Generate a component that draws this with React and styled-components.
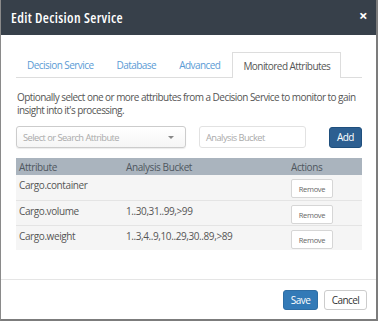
import React from 'react'
import styled, {createGlobalStyle} from 'styled-components'

const GlobalStyle = createGlobalStyle`
  html, body {
    margin: 0;
    padding: 0;
    background: #ffffff;
    font-family: 'Open Sans', 'Liberation Sans', sans-serif;
    letter-spacing: -0.55px;
  }
  * { box-sizing: border-box; }
  button { font-family: inherit; letter-spacing: inherit; }
`

const Modal = styled.div`
  width: 378px;
  height: 321px;
  background: #ffffff;
  border-left: 1px solid #8a8a8a;
  border-right: 2px solid #7c7c7c;
  border-bottom: 2px solid #7c7c7c;
  display: flex;
  flex-direction: column;
`

const Header = styled.div`
  height: 35px;
  background: #37404a;
  display: flex;
  align-items: center;
  justify-content: space-between;
  padding: 0 9px 0 10px;
  color: #ffffff;
`

const Title = styled.h4`
  margin: 0;
  font-size: 14px;
  font-weight: 600;
  font-stretch: 75%;
  letter-spacing: 0.35px;
`

const Close = styled.span`
  font-size: 15px;
  font-weight: 700;
  line-height: 1;
  margin-top: -4px;
`

const Body = styled.div`
  flex: 1;
  padding: 17px 14px 0 15px;
`

const Tabs = styled.div`
  display: flex;
  border-bottom: 1px solid #dddddd;
  height: 26px;
`

const Tab = styled.div`
  padding: 0 10px;
  height: ${p => (p.$active ? '26px' : '25px')};
  display: flex;
  align-items: center;
  font-size: 10px;
  color: ${p => (p.$active ? '#555555' : '#5b9bd5')};
  background: #ffffff;
  border: 1px solid ${p => (p.$active ? '#dddddd' : 'transparent')};
  border-bottom: none;
  margin-right: ${p => p.$gap || 0}px;
  white-space: nowrap;
`

const Description = styled.p`
  margin: 13px 0 0 1px;
  font-size: 10px;
  line-height: 13px;
  color: #555555;
`

const Controls = styled.div`
  display: flex;
  align-items: center;
  margin-top: 9px;
  height: 22px;
`

const Select = styled.div`
  width: 170px;
  height: 22px;
  border: 1px solid #cccccc;
  border-radius: 3px;
  background: linear-gradient(#ffffff, #f5f5f5);
  box-shadow: 0 1px 1px rgba(0, 0, 0, 0.08);
  display: flex;
  align-items: center;
  justify-content: space-between;
  padding: 0 11px 0 6px;
  font-size: 9.3px;
  color: #aaaaaa;
`

const Caret = styled.span`
  width: 0;
  height: 0;
  border-left: 3px solid transparent;
  border-right: 3px solid transparent;
  border-top: 3px solid #888888;
`

const Input = styled.div`
  width: 107px;
  height: 22px;
  margin-left: 13px;
  border: 1px solid #e2e2e2;
  border-radius: 3px;
  display: flex;
  align-items: center;
  padding-left: 6px;
  font-size: 9.3px;
  color: #aaaaaa;
`

const AddButton = styled.button`
  margin-left: auto;
  width: 33px;
  height: 21px;
  border: 1px solid #1f4f7d;
  border-radius: 3px;
  background: #2d5f91;
  color: #ffffff;
  font-size: 10px;
  padding: 0;
`

const Table = styled.div`
  margin-top: 10px;
  display: grid;
  grid-template-columns: 107px 165px 1fr;
  font-size: 10px;
  letter-spacing: -0.4px;
  color: #555555;
`

const HeadCell = styled.div`
  background: #aab4be;
  height: 17px;
  padding-left: 3px;
  display: flex;
  align-items: center;
  color: #4f5760;
`

const Cell = styled.div`
  background: #f5f5f5;
  height: 25px;
  padding: 3px 0 0 3px;
  border-top: ${p => (p.$first ? 'none' : '1px solid #e4e4e4')};
  display: flex;
  align-items: flex-start;
`

const RemoveButton = styled.button`
  width: 42px;
  height: 19px;
  margin-top: 1px;
  border: 1px solid #d6d6d6;
  border-radius: 2px;
  background: #ffffff;
  color: #666666;
  font-size: 7.5px;
  letter-spacing: -0.3px;
  padding: 0;
`

const Footer = styled.div`
  border-top: 1px solid #e5e5e5;
  height: 40px;
  display: flex;
  align-items: center;
  justify-content: flex-end;
  gap: 6px;
  padding-right: 9px;
`

const FooterButton = styled.button`
  width: ${p => p.$width}px;
  height: 20px;
  border-radius: 3px;
  font-size: 10px;
  padding: 0;
  border: 1px solid ${p => (p.$primary ? '#2e6da4' : '#cccccc')};
  background: ${p => (p.$primary ? '#337ab7' : '#ffffff')};
  color: ${p => (p.$primary ? '#ffffff' : '#333333')};
`

const rows = [
  {attr: 'Cargo.container', bucket: ''},
  {attr: 'Cargo.volume', bucket: '1..30,31..99,>99'},
  {attr: 'Cargo.weight', bucket: '1..3,4..9,10..29,30..89,>89'},
]

const App = () => (
  <>
    <GlobalStyle />
    <Modal>
      <Header>
        <Title>Edit Decision Service</Title>
        <Close>×</Close>
      </Header>
      <Body>
        <Tabs>
          <Tab $gap={1}>Decision Service</Tab>
          <Tab $gap={1}>Database</Tab>
          <Tab $gap={1}>Advanced</Tab>
          <Tab $active>Monitored Attributes</Tab>
        </Tabs>
        <Description>
          Optionally select one or more attributes from a Decision Service to monitor to gain
          insight into it's processing.
        </Description>
        <Controls>
          <Select>
            Select or Search Attribute
            <Caret />
          </Select>
          <Input>Analysis Bucket</Input>
          <AddButton>Add</AddButton>
        </Controls>
        <Table>
          <HeadCell>Attribute</HeadCell>
          <HeadCell>Analysis Bucket</HeadCell>
          <HeadCell>Actions</HeadCell>
          {rows.map((row, index) => (
            <React.Fragment key={row.attr}>
              <Cell $first={index === 0}>{row.attr}</Cell>
              <Cell $first={index === 0}>{row.bucket}</Cell>
              <Cell $first={index === 0}>
                <RemoveButton>Remove</RemoveButton>
              </Cell>
            </React.Fragment>
          ))}
        </Table>
      </Body>
      <Footer>
        <FooterButton $primary $width={35}>Save</FooterButton>
        <FooterButton $width={43}>Cancel</FooterButton>
      </Footer>
    </Modal>
  </>
)

export default App
